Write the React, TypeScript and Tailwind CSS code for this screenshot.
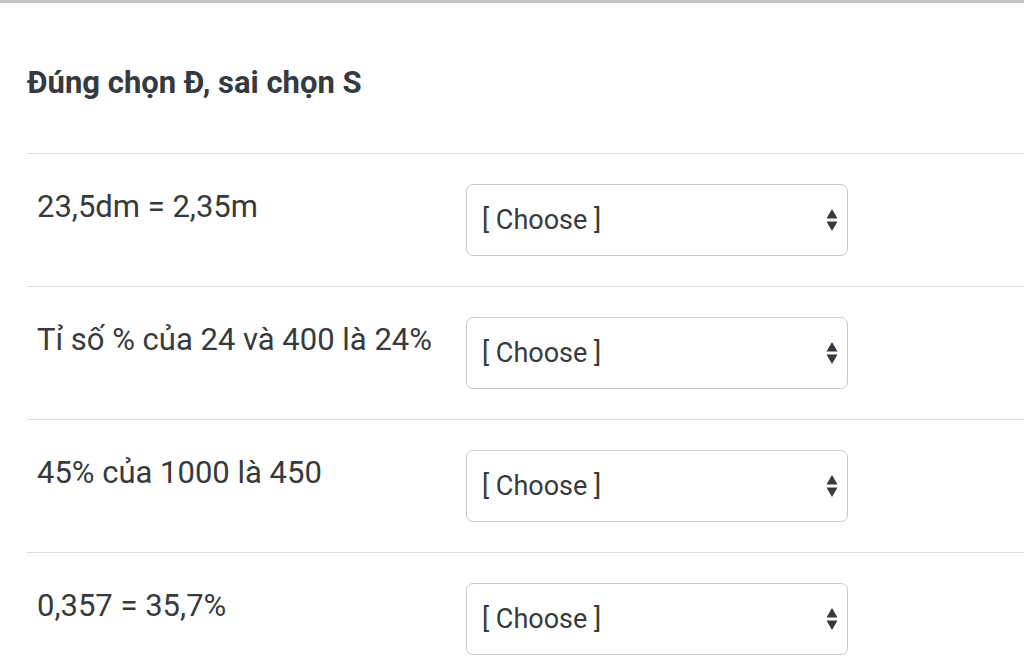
const rows = [
  "23,5dm = 2,35m",
  "Tỉ số % của 24 và 400 là 24%",
  "45% của 1000 là 450",
  "0,357 = 35,7%",
];

function Arrows() {
  return (
    <svg
      className="pointer-events-none absolute right-[10px] top-1/2 -translate-y-1/2"
      width="12"
      height="24"
      viewBox="0 0 12 24"
    >
      <path d="M6 1 L11.5 10.5 L0.5 10.5 Z" fill="#343a40" />
      <path d="M6 23 L11.5 13.5 L0.5 13.5 Z" fill="#343a40" />
    </svg>
  );
}

export default function App() {
  return (
    <div
      className="min-h-[668px] w-[1024px] overflow-hidden border-t-[3px] border-[#c4c4c4] bg-white text-[#373a3c]"
      style={{ fontFamily: "Roboto, 'Noto Sans', sans-serif" }}
    >
      <div className="pl-[27px]">
        <h4 className="mb-[52px] pt-[61px] text-[31px] font-bold leading-[37px] text-[#343a40]">
          Đúng chọn Đ, sai chọn S
        </h4>
        {rows.map((label) => (
          <div key={label} className="flex border-t border-[#dcdcdc] py-[30px]">
            <div className="w-[439px] pl-[10px] text-[31px] leading-[45px]">{label}</div>
            <div className="relative h-[72px] w-[382px]">
              <select className="h-full w-full appearance-none rounded-[7px] border border-[#cacaca] bg-white pl-[15px] text-[27px] text-[#373a3c] outline-none">
                <option>[ Choose ]</option>
                <option>Đ</option>
                <option>S</option>
              </select>
              <Arrows />
            </div>
          </div>
        ))}
      </div>
    </div>
  );
}
